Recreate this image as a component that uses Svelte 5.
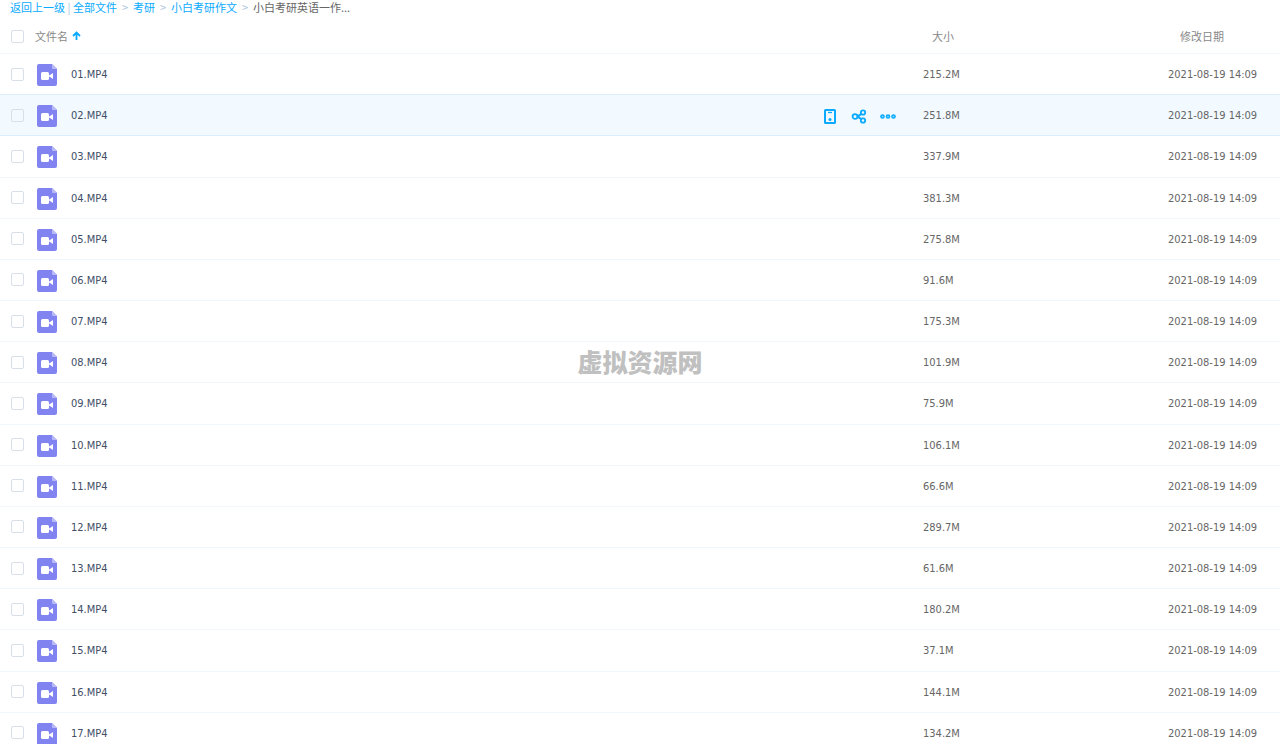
<script lang="ts">
  type VideoFile = { name: string; size: string; date: string; checked: boolean };

  const sizes = [
    '215.2M', '251.8M', '337.9M', '381.3M', '275.8M', '91.6M', '175.3M', '101.9M', '75.9M',
    '106.1M', '66.6M', '289.7M', '61.6M', '180.2M', '37.1M', '144.1M', '134.2M'
  ];

  const folders = ['全部文件', '考研', '小白考研作文'];

  let files: VideoFile[] = $state(
    sizes.map((size, i) => ({
      name: String(i + 1).padStart(2, '0') + '.MP4',
      size,
      date: '2021-08-19 14:09',
      checked: false
    }))
  );
  let active = $state(1);
  let allChecked = $derived(files.every((f) => f.checked));

  function toggleAll(event: Event) {
    const target = event.target as HTMLInputElement;
    for (const file of files) file.checked = target.checked;
  }
</script>

<main class="browser">
  <nav class="crumbs" aria-label="路径">
    <a href="#back">返回上一级</a>
    <span class="bar">|</span>
    {#each folders as folder}
      <a href="#{folder}">{folder}</a>
      <span class="sep">&gt;</span>
    {/each}
    <span class="current">小白考研英语一作...</span>
  </nav>

  <table class="files">
    <thead>
      <tr>
        <th class="check"><input type="checkbox" aria-label="全选" checked={allChecked} onchange={toggleAll} /></th>
        <th class="name">
          <button class="sort">
            文件名
            <svg width="9" height="10" viewBox="0 0 9 10" aria-hidden="true">
              <path d="M4.5 9V2M1 5l3.5-3.5L8 5" fill="none" stroke="#09aaff" stroke-width="1.8" />
            </svg>
          </button>
        </th>
        <th class="size">大小</th>
        <th class="date">修改日期</th>
      </tr>
    </thead>
    <tbody>
      {#each files as file, i}
        <tr class:active={i === active} onmouseenter={() => (active = i)}>
          <td class="check"><input type="checkbox" aria-label={file.name} bind:checked={file.checked} /></td>
          <td class="name">
            <div class="cell">
              <svg class="icon" width="20" height="22" viewBox="0 0 20 22" aria-hidden="true">
                <path d="M2 0h13l5 5v15a2 2 0 0 1-2 2H2a2 2 0 0 1-2-2V2a2 2 0 0 1 2-2z" fill="#8183f1" />
                <path d="M15 0l5 5h-4a1 1 0 0 1-1-1z" fill="#b9baf8" />
                <rect x="4" y="8" width="8" height="8" rx="1.5" fill="#fff" />
                <path d="M11 12l2-1 3-2v6l-3-2-2-1z" fill="#fff" />
              </svg>
              <a class="title" href="#{file.name}">{file.name}</a>
              {#if i === active}
                <span class="actions">
                  <button aria-label="发送到手机">
                    <svg width="16" height="16" viewBox="0 0 16 16">
                      <rect x="3" y="2" width="10" height="13" rx="0.5" fill="none" stroke="#09aaff" stroke-width="2" />
                      <path d="M6 4.5h4" stroke="#09aaff" stroke-width="1.3" />
                      <circle cx="8" cy="11.5" r="1.5" fill="#09aaff" />
                    </svg>
                  </button>
                  <button aria-label="分享">
                    <svg width="16" height="16" viewBox="0 0 16 16" fill="none" stroke="#09aaff" stroke-width="1.8">
                      <circle cx="4" cy="8.5" r="2.4" />
                      <circle cx="12" cy="4.5" r="2.2" />
                      <circle cx="12" cy="12.5" r="2.2" />
                      <path d="M6.2 8C8 8 9 7 10 6M6.2 9C8 9 9 10 10 11" />
                    </svg>
                  </button>
                  <button aria-label="更多">
                    <svg width="16" height="16" viewBox="0 0 16 16" fill="#8dd8ff" stroke="#09aaff" stroke-width="1.5">
                      <circle cx="2.5" cy="8.5" r="1.6" />
                      <circle cx="8" cy="8.5" r="1.6" />
                      <circle cx="13.5" cy="8.5" r="1.6" />
                    </svg>
                  </button>
                </span>
              {/if}
            </div>
          </td>
          <td class="size">{file.size}</td>
          <td class="date">{file.date}</td>
        </tr>
      {/each}
    </tbody>
  </table>

  <div class="watermark">虚拟资源网</div>
</main>

<style>
  :global(body) {
    margin: 0;
    overflow: hidden;
    background: #fff;
  }

  .browser {
    position: relative;
    height: 100vh;
    font: 11px/16px 'DejaVu Sans Condensed', 'Noto Sans CJK SC', sans-serif;
    color: #666;
  }

  .crumbs {
    display: flex;
    height: 16px;
    padding-left: 10px;
    font-family: 'Noto Sans CJK SC', sans-serif;
    line-height: 14px;
    white-space: nowrap;
  }

  .crumbs a {
    color: #09aaff;
    text-decoration: none;
  }

  .bar,
  .sep {
    color: #a9c4dc;
    text-align: center;
  }

  .bar {
    width: 8px;
  }

  .sep {
    width: 16px;
  }

  .current {
    color: #666;
  }

  .files {
    width: 100%;
    height: calc(100vh - 6px);
    table-layout: fixed;
    border-collapse: separate;
    border-spacing: 0;
  }

  th,
  td {
    box-sizing: border-box;
    height: 41px;
    padding: 2px 0 0;
    border-bottom: 1px solid #f2f6fd;
    text-align: left;
    vertical-align: middle;
    white-space: nowrap;
  }

  th {
    height: 38px;
    padding-top: 3px;
    font-family: 'Noto Sans CJK SC', sans-serif;
    font-weight: normal;
    color: #888;
  }

  td.check {
    padding-top: 0;
  }

  .check {
    width: 35px;
    padding-left: 11px;
  }

  .size {
    width: 245px;
  }

  .date {
    width: 112px;
  }

  th.size {
    padding-left: 9px;
  }

  th.date {
    padding-left: 12px;
  }

  input {
    display: block;
    appearance: none;
    box-sizing: border-box;
    width: 13px;
    height: 13px;
    margin: 0;
    border: 1px solid #d9dfe9;
    border-radius: 2px;
    background: #fff;
  }

  input:checked {
    border-color: #09aaff;
    background: #09aaff;
  }

  button {
    display: flex;
    padding: 0;
    border: none;
    background: none;
    font: inherit;
    color: inherit;
    cursor: pointer;
  }

  .sort {
    align-items: center;
    gap: 4px;
  }

  .active td {
    background: #f2faff;
    border-bottom-color: #dceefb;
    box-shadow: 0 -1px #dceefb;
  }

  .active input {
    background: #f2faff;
  }

  .cell {
    display: flex;
    align-items: center;
    padding: 0 27px 0 2px;
  }

  .title {
    margin-left: 14px;
    color: #424e67;
    text-decoration: none;
  }

  .actions {
    display: flex;
    gap: 13px;
    margin-left: auto;
  }

  .watermark {
    position: absolute;
    top: 50%;
    left: 50%;
    transform: translate(-50%, -50%);
    padding-bottom: 22px;
    font: 900 25px/25px 'Noto Sans CJK SC', sans-serif;
    color: #c0c0c0;
    white-space: nowrap;
    pointer-events: none;
  }
</style>
